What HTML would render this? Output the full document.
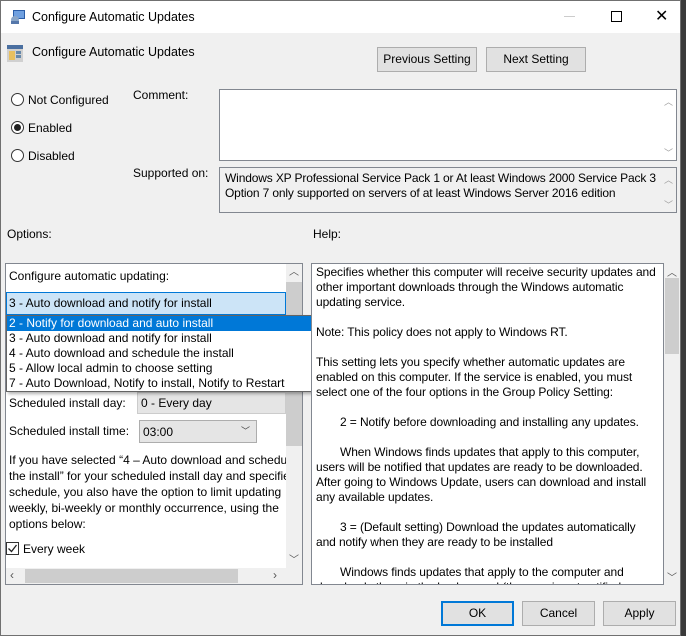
<!DOCTYPE html>
<html><head><meta charset="utf-8"><style>
*{margin:0;padding:0;box-sizing:border-box}
body{width:686px;height:636px;background:#3a3a3a;font-family:"Liberation Sans",sans-serif;font-size:12px;color:#000;position:relative;overflow:hidden}
.win{position:absolute;left:0;top:0;width:681px;height:636px;background:#f0f0f0;border:1px solid #707070}
.a{position:absolute;white-space:nowrap}
.title{position:absolute;left:0;top:0;width:679px;height:32px;background:#fff}
.btn{position:absolute;background:#e1e1e1;border:1px solid #adadad;text-align:center;line-height:23px}
.box{position:absolute;background:#fff;border:1px solid #828790}
.radio{position:absolute;width:13px;height:13px;border:1px solid #333;border-radius:50%;background:#fff}
.sb{position:absolute;background:#f0f0f0}
.arr{position:absolute;color:#a0a0a0;font-size:9px}
.help div{position:absolute;left:4px;white-space:nowrap;letter-spacing:-0.1px}
</style></head><body>
<div class="win">
<div class="title"></div>
<svg class="a" style="left:9px;top:8px" width="16" height="16"><rect x="3" y="1" width="12" height="9" fill="#2a5da8"/><rect x="4" y="2" width="10" height="7" fill="#6fa0e0"/><circle cx="5" cy="11" r="4" fill="#8aa6c8"/><rect x="1" y="12" width="8" height="3" fill="#5577aa"/></svg>
<div class="a" style="left:31px;top:9px;font-size:12.5px">Configure Automatic Updates</div>
<div class="a" style="left:563px;top:15px;width:11px;height:1px;background:#ccc"></div>
<div class="a" style="left:610px;top:10px;width:11px;height:11px;border:1px solid #000"></div>
<div class="a" style="left:654px;top:5px;font-size:16px">✕</div>
<svg class="a" style="left:6px;top:44px" width="16" height="17"><rect x="0" y="0" width="16" height="17" fill="#d0d0d0"/><rect x="0" y="0" width="16" height="4" fill="#4a6fa0"/><rect x="2" y="6" width="6" height="9" fill="#e8c060"/><rect x="9" y="6" width="5" height="3" fill="#6688aa"/><rect x="9" y="10" width="5" height="3" fill="#6688aa"/></svg>
<div class="a" style="left:31px;top:44px;font-size:12.5px">Configure Automatic Updates</div>
<div class="btn" style="left:376px;top:46px;width:100px;height:25px">Previous Setting</div>
<div class="btn" style="left:485px;top:46px;width:100px;height:25px">Next Setting</div>
<div class="radio" style="left:10px;top:92px"></div><div class="a" style="left:27px;top:92px">Not Configured</div>
<div class="radio" style="left:10px;top:120px"></div><div class="a" style="left:13px;top:123px;width:7px;height:7px;border-radius:50%;background:#222"></div><div class="a" style="left:27px;top:120px">Enabled</div>
<div class="radio" style="left:10px;top:148px"></div><div class="a" style="left:27px;top:148px">Disabled</div>
<div class="a" style="left:132px;top:87px">Comment:</div>
<div class="box" style="left:218px;top:88px;width:458px;height:72px"></div>
<div class="arr" style="left:663px;top:94px">︿</div><div class="arr" style="left:663px;top:145px">﹀</div>
<div class="a" style="left:132px;top:165px">Supported on:</div>
<div class="box" style="left:218px;top:166px;width:458px;height:46px;background:#f0f0f0"></div>
<div class="a" style="left:224px;top:170px;letter-spacing:-0.15px">Windows XP Professional Service Pack 1 or At least Windows 2000 Service Pack 3</div>
<div class="a" style="left:224px;top:185px;letter-spacing:-0.15px">Option 7 only supported on servers of at least Windows Server 2016 edition</div>
<div class="arr" style="left:663px;top:172px">︿</div><div class="arr" style="left:663px;top:197px">﹀</div>
<div class="a" style="left:6px;top:226px">Options:</div>
<div class="a" style="left:312px;top:226px">Help:</div>

<!-- options panel -->
<div class="box" style="left:4px;top:262px;width:298px;height:322px;border-color:#828790"></div>
<div class="sb" style="left:285px;top:263px;width:16px;height:304px"></div>
<div class="a" style="left:285px;top:281px;width:16px;height:164px;background:#cdcdcd"></div>
<div class="a" style="left:288px;top:262px;font-size:10px;color:#555">︿</div>
<div class="a" style="left:288px;top:550px;font-size:10px;color:#555">﹀</div>
<div class="sb" style="left:5px;top:567px;width:296px;height:16px"></div>
<div class="a" style="left:24px;top:568px;width:213px;height:14px;background:#cdcdcd"></div>
<div class="a" style="left:9px;top:567px;color:#555">‹</div><div class="a" style="left:272px;top:567px;color:#555">›</div>
<div class="a" style="left:8px;top:268px">Configure automatic updating:</div>
<div class="a" style="left:5px;top:291px;width:280px;height:23px;background:#cce4f7;border:1px solid #0078d7"></div>
<div class="a" style="left:8px;top:295px">3 - Auto download and notify for install</div>
<div class="a" style="left:136px;top:391px;width:149px;height:22px;background:#e5e5e5;border:1px solid #ccc"></div>
<div class="a" style="left:140px;top:395px">0 - Every day</div>
<div class="a" style="left:8px;top:395px">Scheduled install day:</div>
<div class="a" style="left:8px;top:423px">Scheduled install time:</div>
<div class="a" style="left:138px;top:419px;width:118px;height:23px;background:#e5e5e5;border:1px solid #adadad"></div>
<div class="a" style="left:142px;top:424px">03:00</div>
<div class="a" style="left:240px;top:423px;font-size:9px;color:#444">﹀</div>
<div class="a" style="left:8px;top:451px;line-height:16px;width:277px;overflow:hidden">If you have selected “4 – Auto download and schedule<br>the install” for your scheduled install day and specified<br>schedule, you also have the option to limit updating<br>weekly, bi-weekly or monthly occurrence, using the<br>options below:</div>
<div class="a" style="left:5px;top:541px;width:13px;height:13px;border:1px solid #333;background:#fff"></div>
<svg class="a" style="left:6px;top:542px" width="11" height="11"><path d="M1.5 5.5 L4.5 8.5 L9.5 2" stroke="#222" stroke-width="1.3" fill="none"/></svg>
<div class="a" style="left:22px;top:541px">Every week</div>
<!-- dropdown -->
<div class="a" style="left:5px;top:314px;width:315px;height:77px;background:#fff;border:1px solid #646464;box-shadow:2px 2px 3px rgba(0,0,0,.3)"></div>
<div class="a" style="left:6px;top:315px;width:313px;height:15px;background:#0078d7"></div>
<div class="a" style="left:8px;top:315px;color:#fff">2 - Notify for download and auto install</div>
<div class="a" style="left:8px;top:330px">3 - Auto download and notify for install</div>
<div class="a" style="left:8px;top:345px">4 - Auto download and schedule the install</div>
<div class="a" style="left:8px;top:360px">5 - Allow local admin to choose setting</div>
<div class="a" style="left:8px;top:375px">7 - Auto Download, Notify to install, Notify to Restart</div>

<!-- help -->
<div class="box help" style="left:310px;top:262px;width:353px;height:322px;overflow:hidden;border-color:#828790">
<div style="top:1px">Specifies whether this computer will receive security updates and</div>
<div style="top:16px">other important downloads through the Windows automatic</div>
<div style="top:31px">updating service.</div>
<div style="top:61px">Note: This policy does not apply to Windows RT.</div>
<div style="top:91px">This setting lets you specify whether automatic updates are</div>
<div style="top:106px">enabled on this computer. If the service is enabled, you must</div>
<div style="top:121px">select one of the four options in the Group Policy Setting:</div>
<div style="top:151px;left:28px">2 = Notify before downloading and installing any updates.</div>
<div style="top:181px;left:28px">When Windows finds updates that apply to this computer,</div>
<div style="top:196px">users will be notified that updates are ready to be downloaded.</div>
<div style="top:211px">After going to Windows Update, users can download and install</div>
<div style="top:226px">any available updates.</div>
<div style="top:256px;left:28px">3 = (Default setting) Download the updates automatically</div>
<div style="top:271px">and notify when they are ready to be installed</div>
<div style="top:301px;left:28px">Windows finds updates that apply to the computer and</div>
<div style="top:316px">downloads them in the background (the user is not notified</div>
</div>
<div class="a" style="left:664px;top:277px;width:14px;height:76px;background:#cdcdcd"></div>
<div class="a" style="left:666px;top:263px;font-size:10px;color:#555">︿</div>
<div class="a" style="left:666px;top:568px;font-size:10px;color:#555">﹀</div>

<div class="btn" style="left:440px;top:600px;width:73px;height:25px;border:2px solid #0078d7;line-height:21px">OK</div>
<div class="btn" style="left:521px;top:600px;width:73px;height:25px">Cancel</div>
<div class="btn" style="left:602px;top:600px;width:73px;height:25px">Apply</div>
</div>
</body></html>
